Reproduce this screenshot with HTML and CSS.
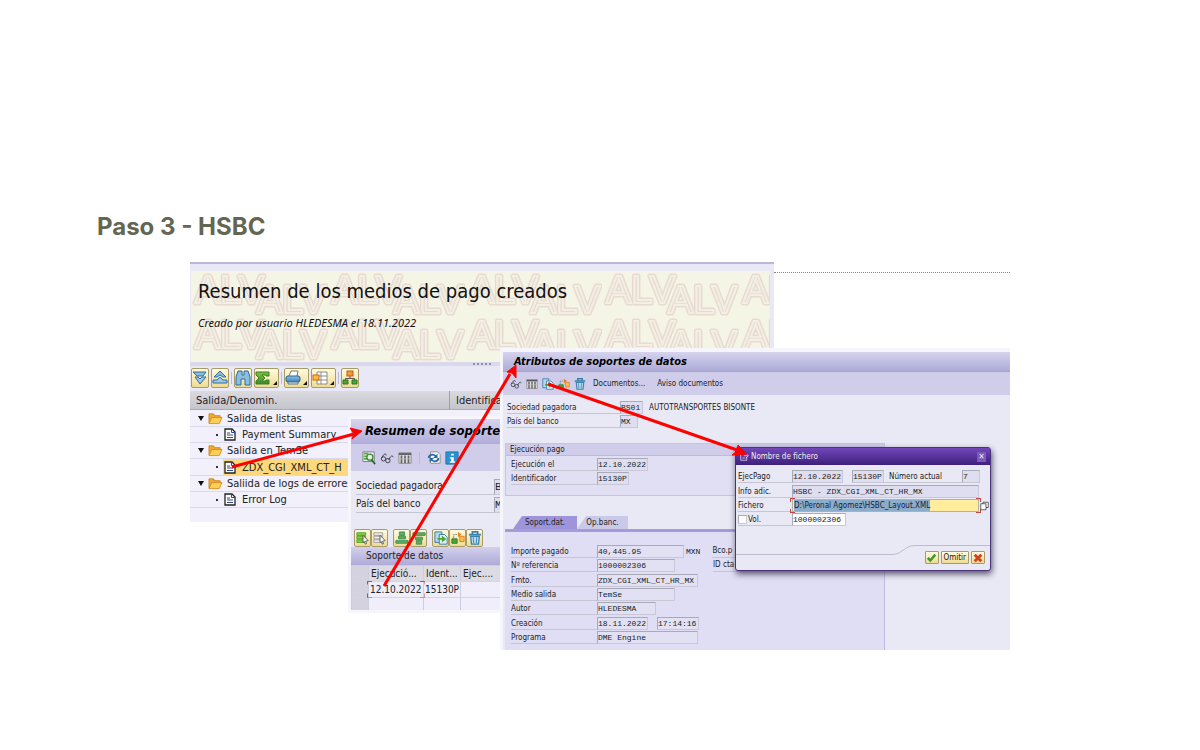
FILE: index.html
```html
<!DOCTYPE html>
<html lang="es">
<head>
<meta charset="utf-8">
<title>Paso 3 - HSBC</title>
<link rel="stylesheet" href="styles.css">
</head>
<body>
<svg class="defs" aria-hidden="true">
  <defs>
    <linearGradient id="blue" x2="0" y2="1"><stop stop-color="#8fc4e6"/><stop offset="1" stop-color="#3b7fb5"/></linearGradient>
    <linearGradient id="green" x2="0" y2="1"><stop stop-color="#7cc243"/><stop offset="1" stop-color="#3c8a2a"/></linearGradient>
    <symbol id="i-down" viewBox="0 0 16 16"><path d="M1 2h13l-3 4H5z" fill="#8cbfdf" stroke="#2c6da0"/><path d="M3 7h3l2 2 2-2h4l-6 7z" fill="#9cc9e6" stroke="#2c6da0"/></symbol>
    <symbol id="i-up" viewBox="0 0 16 16"><path d="M8 1l6 6h-3L8 5 5 7H2z" fill="#8cbfdf" stroke="#2c6da0"/><path d="M8 7l3 3h4v3H1v-3h4z" fill="#9cc9e6" stroke="#2c6da0"/></symbol>
    <symbol id="i-find" viewBox="0 0 16 16"><path d="M3 1h4v4h2V1h4l2 6v8h-5V9H6v6H1V7z" fill="#8bbfe0" stroke="#2c6da0"/></symbol>
    <symbol id="i-sum" viewBox="0 0 16 16"><path d="M1 2h13v4h-3V5H7l3 3-3 3h4v-1h3v4H1v-3l3-3-3-3z" fill="url(#green)" stroke="#3a7d22"/></symbol>
    <symbol id="i-print" viewBox="0 0 16 16"><path d="M4 6l2-5h7l-1 5" fill="#fff" stroke="#777"/><rect x="1" y="6" width="14" height="6" rx="2" fill="url(#blue)" stroke="#28658f"/><path d="M3 12h10v2H3z" fill="#d8e8ef" stroke="#54788f"/></symbol>
    <symbol id="i-layout" viewBox="0 0 16 16"><path d="M5 2h10v12H5zM5 6h10M5 10h10M9 2v12" fill="#fff" stroke="#8c8c86"/><rect x="1" y="5" width="6" height="5" fill="#f9bd3c" stroke="#d76519"/></symbol>
    <symbol id="i-tree" viewBox="0 0 16 16"><path d="M8 6v3M3.500 10V8.500h9V10" fill="none" stroke="#555"/><rect x="5" y="1" width="6" height="5" fill="#f59a2f" stroke="#c15b16"/><path d="M1 10h5v4H1zM10 10h5v4h-5z" fill="#4ba536" stroke="#2c7424"/></symbol>
    <symbol id="i-folder" viewBox="0 0 16 14"><path d="M1 12V2h5l1 2h6v3" fill="#f4a72c" stroke="#c98a22"/><path d="M1 12.500L4 6h11l-3 6.500z" fill="#ffd055" stroke="#d68f25"/></symbol>
    <symbol id="i-doc" viewBox="0 0 12 13"><path d="M1 1h7l3 3v8H1z" fill="#fff" stroke="#222" stroke-width="1.300"/><path d="M7.500 1v3.500H11M3 5h3M3 7h6M3 9.500h6" fill="none" stroke="#35458d"/></symbol>
    <symbol id="i-search" viewBox="0 0 16 16"><path d="M1 1h13v11H1z" fill="#eef" stroke="#777"/><path d="M2 3h5M2 6h4M2 9h5" stroke="#5cad44" stroke-width="2"/><circle cx="9" cy="7" r="3.500" fill="#e4f2dd" stroke="#3b8a38" stroke-width="1.500"/><path d="M11 10l4 5" stroke="#27682c" stroke-width="2"/></symbol>
    <symbol id="i-glasses" viewBox="0 0 16 16"><path d="M2 8c2-5 5-6 5-3M10 10c2-4 4-6 5-3" fill="none" stroke="#333"/><circle cx="4" cy="9" r="2.500" fill="none" stroke="#333"/><circle cx="9" cy="11" r="2.500" fill="none" stroke="#333"/></symbol>
    <symbol id="i-cols" viewBox="0 0 16 16"><path d="M1 2h14v12H1z" fill="#e2e2e4" stroke="#888"/><path d="M1 3.500h14" stroke="#556" stroke-width="2"/><path d="M4 5v9M8 5v9M12 5v9" stroke="#666" stroke-width="2"/><path d="M1 9h14" stroke="#bbb"/></symbol>
    <symbol id="i-refresh" viewBox="0 0 16 16"><path d="M4 1h8l3 3v10H4z" fill="#f7f9fb" stroke="#888"/><path d="M2 8c0-4 5-5 8-2M13 8c0 4-5 5-8 2" fill="none" stroke="#2468a3" stroke-width="2"/><path d="M12 3v5H7zM3 13V8h5z" fill="#2468a3"/></symbol>
    <symbol id="i-info" viewBox="0 0 16 16"><path d="M1 1h14v14H1z" fill="#2a92d2" stroke="#1b73ab"/><path d="M7 3h3v2H7zM5.500 7H10v5h1.500v1.500h-6V12H7V8.500H5.500z" fill="#fff"/></symbol>
    <symbol id="i-selall" viewBox="0 0 16 16"><path d="M1 2h10v3H1zM1 6h10v3H1zM1 10h10v3H1z" fill="#86d23c" stroke="#4f9a2f"/><path d="M8 5l6 6-3 .500 1 3-1.500.500-1-3L8 13z" fill="#fff" stroke="#555"/></symbol>
    <symbol id="i-selnone" viewBox="0 0 16 16"><path d="M1 2h10v3H1zM1 6h10v3H1zM1 10h10v3H1z" fill="#f0f0e8" stroke="#999"/><path d="M8 5l6 6-3 .500 1 3-1.500.500-1-3L8 13z" fill="#fff" stroke="#555"/></symbol>
    <symbol id="i-asc" viewBox="0 0 16 16"><path d="M5 1h6v4H5zM4 6h8v3H4zM1 11h14v3H1z" fill="#5fae55" stroke="#3b8a5d"/></symbol>
    <symbol id="i-desc" viewBox="0 0 16 16"><path d="M1 2h14v3H1zM4 7h8v3H4zM5 11h6v4H5z" fill="#5fae55" stroke="#3b8a5d"/></symbol>
    <symbol id="i-copy" viewBox="0 0 16 16"><path d="M1 1h8v12H1z" fill="#b5d7ed" stroke="#2c73a3"/><path d="M6 4h6l3 3v8H6z" fill="#e4f0f6" stroke="#2c73a3"/><path d="M4 8h5V5l5 4-5 4v-3H4z" fill="#4aa82c"/></symbol>
    <symbol id="i-flow" viewBox="0 0 16 16"><path d="M3 8V4h5" fill="none" stroke="#777" stroke-dasharray="2 1"/><path d="M1 9h6v5H1z" fill="#4ba536" stroke="#2c7424"/><path d="M10 6h5v6h-5z" fill="#fbc04a" stroke="#dd7a22"/><path d="M8 1l4 3-4 3z" fill="#e18127"/></symbol>
    <symbol id="i-trash" viewBox="0 0 16 16"><path d="M1 4h14M5 3V1h6v2" fill="none" stroke="#3c82ad" stroke-width="2"/><path d="M3 6h10l-1 9H4z" fill="#b5dced" stroke="#3c82ad" stroke-width="1.500"/><path d="M6 7l.500 7M10 7l-.500 7" stroke="#3c82ad"/></symbol>
    <symbol id="i-edit" viewBox="0 0 12 12"><path d="M9 7v4H1V2h5M5 5h5M8 2l3 3-3 3M3 8h4" fill="none" stroke="#e9e3f5"/></symbol>
    <symbol id="i-check" viewBox="0 0 12 12"><path d="M1 6l3 3 6-7" fill="none" stroke="#3e9a2b" stroke-width="3"/></symbol>
    <symbol id="i-cross" viewBox="0 0 12 12"><path d="M2 2l8 8M10 2l-8 8" stroke="#d0431e" stroke-width="3.500"/></symbol>
    <symbol id="i-match" viewBox="0 0 12 12"><path d="M4 1h7v7H4z" fill="#fff" stroke="#333"/><path d="M1 3h7v8H1z" fill="#fff" stroke="#333"/></symbol>
    <pattern id="watermark" width="137" height="45" patternUnits="userSpaceOnUse">
      <g class="mark"><text x="4" y="32">ALV</text><text x="66" y="42">ALV</text><text x="66" y="-3">ALV</text></g>
      <g class="mark-core"><text x="4" y="32">ALV</text><text x="66" y="42">ALV</text><text x="66" y="-3">ALV</text></g>
    </pattern>
  </defs>
</svg>
<main class="canvas">
  <h1>Paso 3 - HSBC</h1>
  <hr class="rule">

  <section class="win win-list">
    <header class="banner">
      <svg class="banner-bg" aria-hidden="true"><rect width="100%" height="100%" fill="url(#watermark)"/></svg>
      <h2>Resumen de los medios de pago creados</h2>
      <p>Creado por usuario HLEDESMA el 18.11.2022</p>
    </header>
    <div class="splitter"><span class="grip"></span></div>
    <div class="toolbar">
      <button class="tool" aria-label="Expandir"><svg><use href="#i-down"/></svg></button>
      <button class="tool" aria-label="Comprimir"><svg><use href="#i-up"/></svg></button>
      <span class="sep"></span>
      <button class="tool" aria-label="Buscar"><svg><use href="#i-find"/></svg></button>
      <button class="tool more" aria-label="Total"><svg><use href="#i-sum"/></svg></button>
      <span class="sep"></span>
      <button class="tool more" aria-label="Imprimir"><svg><use href="#i-print"/></svg></button>
      <button class="tool more" aria-label="Disposición"><svg><use href="#i-layout"/></svg></button>
      <span class="sep"></span>
      <button class="tool" aria-label="Jerarquía"><svg><use href="#i-tree"/></svg></button>
    </div>
    <div class="tree-head"><span>Salida/Denomin.</span><span>Identifica</span></div>
    <ul class="tree">
      <li class="node"><i class="caret"></i><svg class="folder"><use href="#i-folder"/></svg>Salida de listas</li>
      <li class="leaf"><i class="dot"></i><svg class="doc"><use href="#i-doc"/></svg><span>Payment Summary</span></li>
      <li class="node"><i class="caret"></i><svg class="folder"><use href="#i-folder"/></svg>Salida en TemSe</li>
      <li class="leaf on"><i class="dot"></i><svg class="doc"><use href="#i-doc"/></svg><span>ZDX_CGI_XML_CT_H</span></li>
      <li class="node"><i class="caret"></i><svg class="folder"><use href="#i-folder"/></svg>Saliida de logs de errores</li>
      <li class="leaf"><i class="dot"></i><svg class="doc"><use href="#i-doc"/></svg><span>Error Log</span></li>
    </ul>
  </section>

  <section class="win win-summary">
    <h2>Resumen de soporte</h2>
    <div class="iconbar">
      <button aria-label="Detalle"><svg><use href="#i-search"/></svg></button>
      <button aria-label="Visualizar"><svg><use href="#i-glasses"/></svg></button>
      <button aria-label="Columnas"><svg><use href="#i-cols"/></svg></button>
      <span class="sep"></span>
      <button aria-label="Actualizar"><svg><use href="#i-refresh"/></svg></button>
      <button aria-label="Información"><svg><use href="#i-info"/></svg></button>
    </div>
    <div class="form">
      <div class="row"><label for="s-soc">Sociedad pagadora</label><input id="s-soc" value="B" readonly></div>
      <div class="row"><label for="s-pais">País del banco</label><input id="s-pais" value="M" readonly></div>
    </div>
    <div class="tools">
      <button class="tool" aria-label="Marcar todo"><svg><use href="#i-selall"/></svg></button>
      <button class="tool" aria-label="Desmarcar"><svg><use href="#i-selnone"/></svg></button>
      <span class="sep"></span>
      <button class="tool" aria-label="Ascendente"><svg><use href="#i-asc"/></svg></button>
      <button class="tool" aria-label="Descendente"><svg><use href="#i-desc"/></svg></button>
      <span class="sep"></span>
      <button class="tool" aria-label="Copiar"><svg><use href="#i-copy"/></svg></button>
      <button class="tool" aria-label="Transferir"><svg><use href="#i-flow"/></svg></button>
      <button class="tool" aria-label="Borrar"><svg><use href="#i-trash"/></svg></button>
    </div>
    <table class="grid">
      <caption>Soporte de datos</caption>
      <thead><tr><th class="sel"></th><th class="c1">Ejecució...</th><th class="c2">Ident...</th><th>Ejec....</th></tr></thead>
      <tbody>
        <tr><td class="sel"></td><td><span class="focus corners">12.10.2022</span></td><td>15130P</td><td></td></tr>
        <tr class="last"><td class="sel"></td><td></td><td></td><td></td></tr>
      </tbody>
    </table>
  </section>

  <section class="win win-attr">
    <h2>Atributos de soportes de datos</h2>
    <div class="iconbar">
      <button aria-label="Visualizar"><svg><use href="#i-glasses"/></svg></button>
      <button aria-label="Columnas"><svg><use href="#i-cols"/></svg></button>
      <button aria-label="Copiar"><svg><use href="#i-copy"/></svg></button>
      <button aria-label="Transferir"><svg><use href="#i-flow"/></svg></button>
      <button aria-label="Borrar"><svg><use href="#i-trash"/></svg></button>
      <button class="text">Documentos...</button>
      <button class="text">Aviso documentos</button>
    </div>
    <div class="form head-form">
      <div class="row"><label for="a-soc">Sociedad pagadora</label><input id="a-soc" class="w22" value="BS01" readonly><span class="note">AUTOTRANSPORTES BISONTE</span></div>
      <div class="row"><label for="a-pais">País del banco</label><input id="a-pais" class="w17" value="MX" readonly></div>
    </div>
    <fieldset class="group">
      <legend>Ejecución pago</legend>
      <div class="form">
        <div class="row"><label for="a-el">Ejecución el</label><input id="a-el" class="w50" value="12.10.2022" readonly></div>
        <div class="row"><label for="a-id">Identificador</label><input id="a-id" class="w32" value="15130P" readonly></div>
      </div>
    </fieldset>
    <div class="tabs"><button class="tab active">Soport.dat.</button><button class="tab">Op.banc.</button></div>
    <div class="panel">
      <div class="form">
        <div class="row"><label for="p1">Importe pagado</label><input id="p1" class="w86" value="40,445.95" readonly><span class="unit">MXN</span><span class="extra">Bco.p</span></div>
        <div class="row"><label for="p2">Nº referencia</label><input id="p2" class="w77" value="1000002306" readonly><span class="extra far">ID cta</span></div>
        <div class="row"><label for="p3">Fmto.</label><input id="p3" class="w100" value="ZDX_CGI_XML_CT_HR_MX" readonly></div>
        <div class="row"><label for="p4">Medio salida</label><input id="p4" class="w77" value="TemSe" readonly></div>
        <div class="row"><label for="p5">Autor</label><input id="p5" class="w59" value="HLEDESMA" readonly></div>
        <div class="row"><label for="p6">Creación</label><input id="p6" class="w50" value="18.11.2022" readonly><input class="w41" aria-label="Hora" value="17:14:16" readonly></div>
        <div class="row"><label for="p7">Programa</label><input id="p7" class="w100" value="DME Engine" readonly></div>
      </div>
    </div>
  </section>

  <section class="dialog" role="dialog" aria-labelledby="dlg-title">
    <header><svg><use href="#i-edit"/></svg><h2 id="dlg-title">Nombre de fichero</h2><button aria-label="Cerrar">✕</button></header>
    <div class="form">
      <div class="row"><label for="d1">EjecPago</label><input id="d1" class="w50" value="12.10.2022" readonly><input class="w32" aria-label="Identificador" value="15130P" readonly><label class="num" for="d2">Número actual</label><input id="d2" class="w17" value="7" readonly></div>
      <div class="row"><label for="d3">Info adic.</label><input id="d3" class="fill" value="HSBC - ZDX_CGI_XML_CT_HR_MX" readonly></div>
      <div class="row"><label for="d4">Fichero</label><div class="file corners" id="d4" role="textbox" tabindex="0"><mark>D:\Peronal Agomez\HSBC_Layout.XML</mark></div><button class="match" aria-label="Ayuda"><svg><use href="#i-match"/></svg></button></div>
      <div class="row"><label class="vol"><input type="checkbox">Vol.</label><input class="white" aria-label="Vol." value="1000002306"></div>
    </div>
    <footer>
      <svg class="swoosh" viewBox="0 0 254 12" preserveAspectRatio="none" aria-hidden="true"><path d="M0 9.500H157c8 0 12-9 22-9h75" fill="none" stroke="#bcbcd0"/></svg>
      <div class="actions">
        <button aria-label="Aceptar"><svg><use href="#i-check"/></svg></button>
        <button class="label">Omitir</button>
        <button aria-label="Cancelar"><svg><use href="#i-cross"/></svg></button>
      </div>
    </footer>
  </section>

  <svg class="arrows" viewBox="0 0 1200 750" aria-hidden="true">
    <path d="M232 467L354 434M384 586L510 374M548 384L737 450"/>
    <path class="tip" d="M362 431l-12-3 4 6-2 5zM516 365l-9 7 5 1 4 5zM747 454l-9-9-1 6-5 4z"/>
  </svg>
</main>
</body>
</html>
```
FILE: styles.css
```css
* { box-sizing: border-box; }
body { margin: 0; background: #fff; color: #222; font-family: "DejaVu Sans Condensed", "DejaVu Sans", sans-serif; }
h1, h2, p, ul { margin: 0; padding: 0; font-weight: normal; }
button, input { margin: 0; padding: 0; border: 0; border-radius: 0; background: none; font: inherit; color: inherit; }
svg { display: block; flex: none; }
.defs { position: absolute; width: 0; height: 0; }

.canvas { position: relative; min-height: 100vh; overflow: hidden; }
h1 { padding: 213px 97px 0; font: 700 24px/28px Inter, sans-serif; color: #636650; }
.rule { position: absolute; left: 774px; top: 272px; width: 236px; margin: 0; border: 0; border-top: 1px dotted #888; }
.win { position: absolute; overflow: hidden; background: #e9e9f5; white-space: nowrap; }

/* Document list */
.win-list { left: 190px; top: 262px; width: 584px; background: #e9e8f6; border-top: 2px solid #b9b8d8; padding-top: 7px; font-size: 11px; }
.banner { position: relative; height: 91px; margin: 0 4px 0 1px; padding: 6px 7px; background: #f5f5e6; color: #111; }
.banner-bg { position: absolute; inset: 0; width: 100%; height: 100%; }
.mark text, .mark-core text { font: 38px "Liberation Sans", sans-serif; }
.mark { fill: none; stroke: #e8dad3; stroke-width: 5px; stroke-linejoin: round; }
.mark-core { fill: #e8dad3; stroke: #f3efe2; stroke-width: 2px; }
.banner h2 { position: relative; font: 20px/28px "DejaVu Sans Condensed", sans-serif; }
.banner p { position: relative; margin-top: 10px; font: italic 11px/16px "Noto Sans", sans-serif; }
.splitter { height: 4px; background: #dad9ec; display: flex; justify-content: center; align-items: center; }
.grip { width: 18px; border-top: 2px dotted #9291b2; }
.toolbar { display: flex; align-items: center; gap: 2px; height: 25px; padding: 0 1px 1px; }
.tool { display: flex; align-items: center; justify-content: center; flex: none; background: linear-gradient(#fffbe0, #eedb93); border: 1px solid #a99b68; border-radius: 2px; }
.toolbar .tool { width: 18px; height: 20px; }
.toolbar .tool svg { width: 16px; height: 16px; }
.toolbar .more { width: 25px; justify-content: flex-start; position: relative; }
.more::after { content: ""; position: absolute; right: 1px; bottom: 2px; border: 2px solid; border-color: transparent #111 #111 transparent; }
.sep { width: 1px; height: 12px; background: #bcbccc; flex: none; }
.tree-head { display: flex; height: 19px; line-height: 19px; background: linear-gradient(#dadadf, #c4c4cc); border-bottom: 1px solid #aaaab8; }
.tree-head span:first-child { width: 260px; padding-left: 6px; border-right: 1px solid #9f9fae; }
.tree-head span + span { padding-left: 6px; }
.tree { list-style: none; height: 112px; background: #f1f0fb; }
.tree li { display: flex; align-items: center; height: 16px; border-bottom: 1px solid #d9d8ec; gap: 4px; padding-left: 8px; width: 160px; }
.tree li:nth-child(3n+1) { height: 17px; }
.caret { border: 3px solid transparent; border-top: 5px solid #111; border-bottom: 0; }
.folder { width: 15px; height: 13px; }
.tree .leaf { padding-left: 26px; gap: 6px; }
.dot { width: 2px; height: 2px; background: #333; }
.doc { width: 12px; height: 13px; }
.tree .on { background: linear-gradient(to right, transparent 33px, #fdd87c 33px); }

/* Media summary */
.win-summary { left: 351px; top: 419px; width: 153px; height: 191px; box-shadow: 0 0 0 3px #f6f5fb; font-size: 10px; }
.win-summary h2 { height: 25px; padding-left: 14px; font: italic 700 13px/24px "DejaVu Sans Condensed", sans-serif; color: #000; background: linear-gradient(#d7d4ee, #b0addb); }
.iconbar { display: flex; align-items: center; background: #cfcde9; }
.win-summary .iconbar { height: 27px; padding-left: 11px; gap: 4px; }
.win-summary .iconbar svg { width: 14px; height: 14px; }
.win-summary .iconbar .sep { margin: 0 3px; }
.row { display: flex; align-items: flex-end; }
.row label { flex: none; border-bottom: 1px solid #c6c6d2; }
.row input { flex: none; border: 1px solid #aaa9b8; border-right-color: #c9c8d8; border-bottom-color: #c9c8d8; background: #dfdef0; font-family: "Liberation Mono", monospace; }
.win-summary .form { padding: 6px 0 0 5px; }
.win-summary .row label { width: 138px; height: 18px; line-height: 18px; }
.win-summary .row input { width: 34px; height: 16px; font-size: 11px; }
.tools { display: flex; align-items: center; height: 19px; margin-top: 15px; padding: 0 3px; }
.tools .tool { width: 17px; height: 18px; }
.tools .tool svg { width: 14px; height: 14px; }
.tools .sep { margin: 0 2px; background: none; }
.grid { width: 100%; border-collapse: collapse; table-layout: fixed; }
.grid caption { height: 18px; padding-left: 15px; line-height: 18px; text-align: left; background: linear-gradient(#d3d0ec, #aeabd9); }
.grid th, .grid td { height: 16px; padding: 0 1px; border: 1px solid #cecddd; border-bottom-color: #d5d4e4; font-weight: normal; text-align: left; line-height: 14px; background: #efeefa; }
.grid th { background: #dcdbe3; padding-left: 2px; }
.grid .sel { width: 17px; background: #d3d2de; }
.grid .c1 { width: 55px; }
.grid .c2 { width: 37px; }
/* Red corner brackets around the active cell */
.corners { position: relative; }
.corners::before, .corners::after { content: ""; position: absolute; top: -3px; bottom: -3px; width: 4px; border: 1px solid #c34545; clip-path: polygon(0 0, 100% 0, 100% 4px, 0 4px, 0 calc(100% - 4px), 100% calc(100% - 4px), 100% 100%, 0 100%); }
.corners::before { left: -3px; border-right: 0; }
.corners::after { right: -3px; border-left: 0; clip-path: polygon(0 0, 100% 0, 100% 4px, 0 4px, 0 calc(100% - 4px), 100% calc(100% - 4px), 100% 100%, 0 100%); }

/* Attributes */
.win-attr { left: 503px; top: 348px; width: 507px; height: 302px; border-top: 4px solid #f6f5fb; box-shadow: -3px 0 0 #f6f5fb; font-size: 8px; }
.win-attr h2 { height: 20px; padding-left: 11px; font: italic 700 11px/19px "DejaVu Sans Condensed", sans-serif; color: #000; background: linear-gradient(#d5d3ed, #aeabd8); border-bottom: 1px solid #a5a2cc; }
.win-attr .iconbar { height: 23px; padding-left: 7px; gap: 4px; }
.win-attr .iconbar svg { width: 12px; height: 12px; }
.iconbar .text { margin-left: 3px; }
.iconbar .text + .text { margin-left: 8px; }
.win-attr .row { height: 14px; }
.win-attr .row label { width: 86px; height: 13px; line-height: 13px; }
.win-attr .row input, .dialog .row input { height: 13px; padding: 0; font-size: 8px; }
.win-attr .head-form { padding: 5px 0 0 4px; }
.win-attr .head-form label { width: 113px; }
.note { margin-left: 6px; line-height: 13px; }
.w17 { width: 18px; } .w22 { width: 23px; } .w32 { width: 32px; } .w41 { width: 42px; } .w50 { width: 51px; } .w59 { width: 59px; } .w77 { width: 78px; } .w86 { width: 87px; } .w100 { width: 101px; }
.group { width: 380px; height: 53px; margin: 15px 0 0 2px; padding: 0; border: 1px solid #c5c3e2; background: #e0dff3; }
.group legend { float: left; width: 100%; height: 12px; padding: 0 4px; line-height: 12px; background: #cfcdea; border-bottom: 1px solid #bdbada; }
.group .form { clear: both; padding: 1px 0 0 5px; }
.tabs { display: flex; margin: 20px 0 0 10px; }
.tab { height: 13px; width: 51px; background: #cbc9e9; clip-path: polygon(9px 0, 100% 0, 100% 100%, 0 100%); line-height: 14px; }
.tab.active { width: 64px; background: #9e94d9; }
.panel { width: 380px; height: 122px; margin-left: 2px; padding: 12px 0 0 6px; border-top: 3px solid #a39bdb; border-right: 1px solid #bfbce1; background: #dfdef4; }
.panel .row:nth-child(3n) { height: 15px; }
.panel .row input { background: #e2e1f4; }
.unit { margin-left: 2px; font: 8px/13px "Liberation Mono", monospace; }
.extra { margin-left: 12px; width: 80px; line-height: 13px; border-bottom: 1px solid #c6c6d2; }
.extra.far { margin-left: 38px; }
.row input + input { margin-left: 9px; }

/* File name dialog */
.dialog { position: absolute; left: 735px; top: 447px; width: 256px; border: 1px solid #4a347c; border-radius: 3px; background: #e9e8f5; box-shadow: 1px 3px 6px #55506a; font-size: 8px; white-space: nowrap; }
.dialog header { display: flex; align-items: center; height: 17px; padding: 0 4px; gap: 2px; color: #eee; background: linear-gradient(#7247bb, #3d207c); }
.dialog header svg { width: 9px; height: 9px; }
.dialog header h2 { flex: 1; font-size: 8px; }
.dialog header button { width: 9px; height: 10px; line-height: 8px; background: #7b5abb; }
.dialog .form { padding: 4px 0 0 2px; }
.dialog .row { height: 14px; }
.dialog .row:nth-child(2) { height: 15px; }
.dialog .row label { width: 54px; height: 13px; line-height: 13px; }
.dialog .row .num { width: 78px; padding-left: 5px; }
.dialog .row .fill { width: 187px; }
.file { flex: none; width: 187px; height: 13px; padding: 0 1px; line-height: 11px; background: #ffec9c; border: 1px solid #b5b0a0; }
.file.corners::before, .file.corners::after { top: -2px; bottom: -2px; }
mark { display: inline-block; background: #8caccb; color: #14233a; }
.match { margin-left: 1px; }
.match svg { width: 9px; height: 12px; }
.dialog .row .vol { display: flex; align-items: center; gap: 1px; }
.dialog .vol input { appearance: none; width: 9px; height: 9px; background: #fff; }
.dialog .row .white { width: 54px; background: #fff; }
.dialog footer { margin-top: 19px; padding-bottom: 3px; }
.swoosh { width: 100%; height: 12px; }
.actions { display: flex; justify-content: flex-end; gap: 2px; height: 16px; padding: 0 5px 3px 0; margin-top: -6px; position: relative; }
.actions button { height: 13px; padding: 0 1px; background: linear-gradient(#fffbe0, #eedb93); border: 1px solid #a99b68; border-radius: 1px; }
.actions svg { width: 10px; height: 10px; }
.actions .label { padding: 0 2px; line-height: 11px; }
.arrows { position: absolute; left: 0; top: 0; width: 1200px; height: 750px; fill: none; stroke: #f00; stroke-width: 3px; pointer-events: none; }
.tip { fill: #f00; stroke-width: 1px; }
```
